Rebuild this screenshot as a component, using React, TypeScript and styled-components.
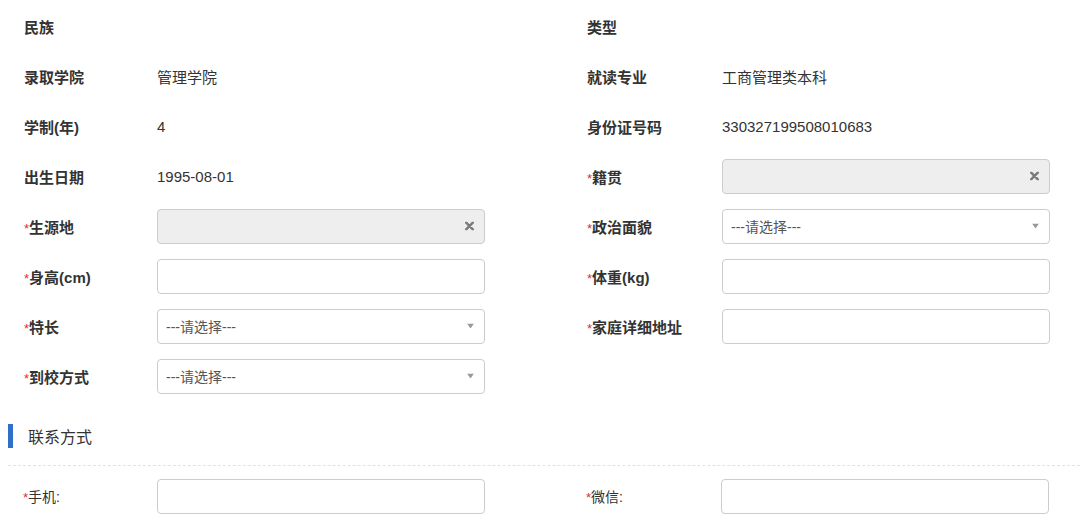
import React from "react";
import styled, { createGlobalStyle } from "styled-components";

const GlobalStyle = createGlobalStyle`
    html, body {
        margin: 0;
        padding: 0;
        background: #fff;
    }
    body {
        font-family: "Liberation Sans", Arial, "Noto Sans CJK SC", sans-serif;
        color: #333;
        font-size: 14px;
    }
`;

const Page = styled.div`
    width: 1080px;
    padding-top: 1px;
    overflow: hidden;
`;

const Grid = styled.div`
    display: grid;
    grid-template-columns: 563px 1fr;
    padding-left: 24px;
`;

const Field = styled.div`
    display: flex;
    align-items: center;
    height: 50px;
`;

const Label = styled.div<{ $plain?: boolean; $w: number }>`
    width: ${(p) => p.$w}px;
    flex-shrink: 0;
    font-weight: ${(p) => (p.$plain ? 400 : 700)};
    font-size: ${(p) => (p.$plain ? 14 : 15)}px;
    color: #333;
`;

const Star = styled.span`
    color: #e52b2b;
    font-weight: 400;
    font-size: 13px;
`;

const Value = styled.div`
    font-size: 15px;
    color: #333;
`;

const Control = styled.div<{ $disabled?: boolean }>`
    position: relative;
    box-sizing: border-box;
    width: 328px;
    height: 35px;
    border: 1px solid #ccc;
    border-radius: 4px;
    background: ${(p) => (p.$disabled ? "#eee" : "#fff")};
    display: flex;
    align-items: center;
    padding: 0 8px;
    font-size: 14px;
    color: #555;
`;

const Icon = styled.span`
    position: absolute;
    right: 10px;
    top: 50%;
    transform: translateY(-50%);
    display: flex;
`;

const Section = styled.div`
    display: flex;
    align-items: center;
    margin: 23px 0 0 8px;
    height: 24px;
`;

const Bar = styled.span`
    width: 5px;
    height: 24px;
    background: #2f6fc7;
    margin-right: 15px;
`;

const SectionTitle = styled.span`
    font-size: 16px;
    color: #333;
`;

const Divider = styled.div`
    margin: 17px 0 0 8px;
    border-top: 1px dashed #e2e2e2;
`;

const BottomGrid = styled(Grid)`
    padding-left: 23px;
    margin-top: 5px;
`;

const ClearIcon = () => (
    <Icon>
        <svg width="9" height="9" viewBox="0 0 9 9">
            <path d="M1.2 1.2 L7.8 7.8 M7.8 1.2 L1.2 7.8" stroke="#7a7a7a" strokeWidth="2.4" strokeLinecap="round" />
        </svg>
    </Icon>
);

const Caret = () => (
    <Icon>
        <svg width="7" height="5" viewBox="0 0 7 5">
            <path d="M0 0 H7 L3.5 5 Z" fill="#999" />
        </svg>
    </Icon>
);

type Row = {
    label: string;
    required?: boolean;
    value?: string;
    kind?: "text" | "disabled" | "input" | "select";
};

const rows: [Row, Row | null][] = [
    [{ label: "民族", kind: "text" }, { label: "类型", kind: "text" }],
    [{ label: "录取学院", value: "管理学院" }, { label: "就读专业", value: "工商管理类本科" }],
    [{ label: "学制(年)", value: "4" }, { label: "身份证号码", value: "330327199508010683" }],
    [{ label: "出生日期", value: "1995-08-01" }, { label: "籍贯", required: true, kind: "disabled" }],
    [{ label: "生源地", required: true, kind: "disabled" }, { label: "政治面貌", required: true, kind: "select" }],
    [{ label: "身高(cm)", required: true, kind: "input" }, { label: "体重(kg)", required: true, kind: "input" }],
    [{ label: "特长", required: true, kind: "select" }, { label: "家庭详细地址", required: true, kind: "input" }],
    [{ label: "到校方式", required: true, kind: "select" }, null],
];

const renderControl = (r: Row) => {
    if (r.kind === "disabled") {
        return (
            <Control $disabled>
                <ClearIcon />
            </Control>
        );
    }
    if (r.kind === "select") {
        return (
            <Control>
                ---请选择---
                <Caret />
            </Control>
        );
    }
    if (r.kind === "input") return <Control />;
    return r.value ? <Value>{r.value}</Value> : null;
};

const FieldCell = ({ row, labelWidth }: { row: Row | null; labelWidth: number }) => {
    if (!row) return <Field />;
    return (
        <Field>
            <Label $w={labelWidth}>
                {row.required && <Star>*</Star>}
                {row.label}
            </Label>
            {renderControl(row)}
        </Field>
    );
};

const App = () => {
    return (
        <Page>
            <GlobalStyle />
            <Grid>
                {rows.map(([l, r], i) => (
                    <React.Fragment key={i}>
                        <FieldCell row={l} labelWidth={133} />
                        <FieldCell row={r} labelWidth={135} />
                    </React.Fragment>
                ))}
            </Grid>
            <Section>
                <Bar />
                <SectionTitle>联系方式</SectionTitle>
            </Section>
            <Divider />
            <BottomGrid>
                <Field>
                    <Label $plain $w={134}>
                        <Star>*</Star>手机:
                    </Label>
                    <Control />
                </Field>
                <Field>
                    <Label $plain $w={135}>
                        <Star>*</Star>微信:
                    </Label>
                    <Control />
                </Field>
            </BottomGrid>
        </Page>
    );
};

export default App;
